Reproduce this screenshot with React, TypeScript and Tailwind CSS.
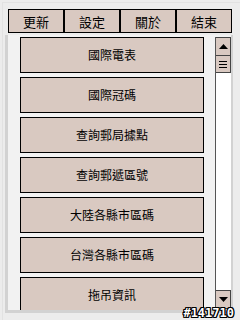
import React from "react";

const cjk = { fontFamily: '"Noto Sans CJK TC", "Noto Sans CJK SC", sans-serif' };

const top = ["更新", "設定", "關於", "結束"];
const items = ["國際電表", "國際冠碼", "查詢郵局據點", "查詢郵遞區號", "大陸各縣市區碼", "台灣各縣市區碼", "拖吊資訊"];

export default function App() {
  return (
    <div className="relative w-[240px] h-[320px] overflow-hidden bg-[#ececec] pt-[9px]" style={cjk}>
      <div className="absolute left-[2px] top-[2px] right-0 bottom-0 border-l border-t border-[#e2e2e2] pointer-events-none" />
      <div className="relative ml-[8px] w-[224px] h-[24px] flex">
        {top.map((t) => (
          <div key={t} className="w-[56px] h-[24px] border border-black bg-[#d9c9c1] flex items-center justify-center text-[13px] leading-none text-black">
            {t}
          </div>
        ))}
      </div>
      <div className="relative mt-[2px] ml-[5px] w-[228px] h-[278px] border-l-[3px] border-r-[2px] border-b-[3px] border-[#d2d2d2] bg-[#f2f2f2] flex">
        <div className="pl-[12px] pt-[2px] w-[207px] flex flex-col gap-[4px] overflow-hidden">
          {items.map((t) => (
            <div key={t} className="shrink-0 w-[184px] h-[36px] border border-black bg-[#d9c9c1] flex items-center justify-center text-[12px] leading-none text-black">
              {t}
            </div>
          ))}
        </div>
        <div className="ml-[3px] mt-[2px] w-[16px] h-[272px] bg-white border-l border-[#555] flex flex-col justify-between">
          <div>
            <div className="h-[19px] bg-[#d9c9c1] border border-[#444] border-l-0 flex items-center justify-center">
              <svg width="9" height="5" viewBox="0 0 9 5"><path d="M4.5 0 L9 5 L0 5 Z" fill="#000" /></svg>
            </div>
            <div className="h-[17px] bg-[#d9c9c1] border border-t-0 border-[#444] border-l-0 flex flex-col items-center justify-center gap-[2px]">
              <div className="w-[8px] h-px bg-black" />
              <div className="w-[8px] h-px bg-black" />
              <div className="w-[8px] h-px bg-black" />
            </div>
          </div>
          <div className="h-[19px] bg-[#d9c9c1] border border-[#444] border-l-0 flex items-center justify-center">
            <svg width="9" height="5" viewBox="0 0 9 5"><path d="M0 0 L9 0 L4.5 5 Z" fill="#000" /></svg>
          </div>
        </div>
      </div>
      <div
        className="absolute right-[6px] bottom-[1px] text-[12px] leading-none font-bold text-white"
        style={{
          fontFamily: '"DejaVu Sans Mono", monospace',
          textShadow: "1px 0 0 #000, -1px 0 0 #000, 0 1px 0 #000, 0 -1px 0 #000, 1px 1px 0 #000, -1px -1px 0 #000, 1px -1px 0 #000, -1px 1px 0 #000",
        }}
      >
        #141710
      </div>
    </div>
  );
}
